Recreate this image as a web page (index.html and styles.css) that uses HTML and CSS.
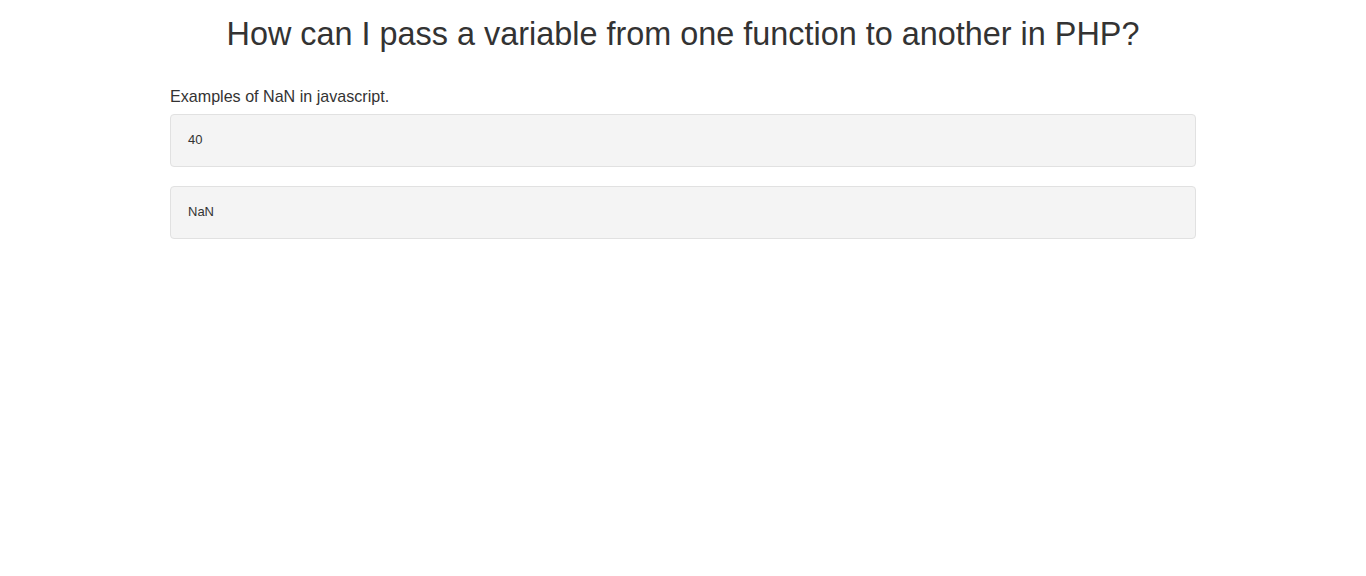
FILE: index.html
```html
<!DOCTYPE html>
<html>
<head>
<meta charset="utf-8">
<link rel="stylesheet" href="styles.css">
</head>
<body>
<div class="container">
  <h1 class="title">How can I pass a variable from one function to another in PHP?</h1>
  <p class="intro">Examples of NaN in javascript.</p>
  <div class="box">40</div>
  <div class="box">NaN</div>
</div>
</body>
</html>
```
FILE: styles.css
```css
html, body {
  margin: 0;
  padding: 0;
  background: #fff;
}
body {
  font-family: "Liberation Sans", Arial, sans-serif;
  color: #333;
}
.container {
  width: 1026px;
  margin: 0 auto;
}
.title {
  font-size: 32.4px;
  font-weight: 400;
  line-height: 36px;
  text-align: center;
  margin: 16px 0 0;
}
.intro {
  font-size: 16.1px;
  line-height: 20px;
  margin: 34px 0 8px;
}
.box {
  background: #f4f4f4;
  border: 1px solid #e1e1e1;
  border-radius: 4px;
  padding: 15px 17px 16px;
  font-size: 13px;
  line-height: 20px;
  margin-bottom: 19px;
}
```
